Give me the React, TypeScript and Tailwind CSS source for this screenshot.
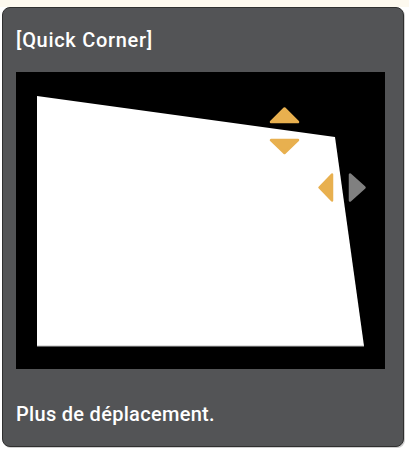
const ORANGE = '#e8b04f'

export default function App() {
  return (
    <div className="w-[409px] h-[454px] bg-white overflow-hidden" style={{ fontFamily: 'Roboto, "DejaVu Sans", sans-serif' }}>
      <div className="h-[7px] bg-[#fdf9ef]" />
      <div className="ml-[2px] w-[402px] h-[440px] rounded-[8px] border border-[#2f2f2f] bg-[#535456] shadow-[1px_1px_0_#cfcfcf] pl-[13px] pt-[20px]">
        <div className="text-[20px] leading-[24px] font-medium tracking-[0.7px] text-white">[Quick Corner]</div>

        {/* keystone preview */}
        <div className="mt-[20px] w-[369px] h-[297px] bg-black">
          <svg width="369" height="297" viewBox="0 0 369 297">
            <polygon points="21,24 319,65 348,274 21,274" fill="#ffffff" />
            <line x1="21" y1="274" x2="348" y2="274" stroke="#bdbdbd" strokeWidth="1" />
            <polygon
              points="268.5,36.5 282,50 255,50"
              fill={ORANGE}
              stroke={ORANGE}
              strokeWidth="2.5"
              strokeLinejoin="round"
            />
            <polygon
              points="255,68 282,68 268.5,81"
              fill={ORANGE}
              stroke={ORANGE}
              strokeWidth="2.5"
              strokeLinejoin="round"
            />
            <polygon
              points="303.5,115.5 316,102.5 316,128.5"
              fill={ORANGE}
              stroke={ORANGE}
              strokeWidth="2.5"
              strokeLinejoin="round"
            />
            <polygon
              points="334,102.5 334,128.5 348.5,115.5"
              fill="#808080"
              stroke="#808080"
              strokeWidth="2.5"
              strokeLinejoin="round"
            />
          </svg>
        </div>

        <div className="mt-[33px] text-[20px] leading-[24px] font-medium tracking-[0.3px] text-white">Plus de déplacement.</div>
      </div>
    </div>
  )
}
